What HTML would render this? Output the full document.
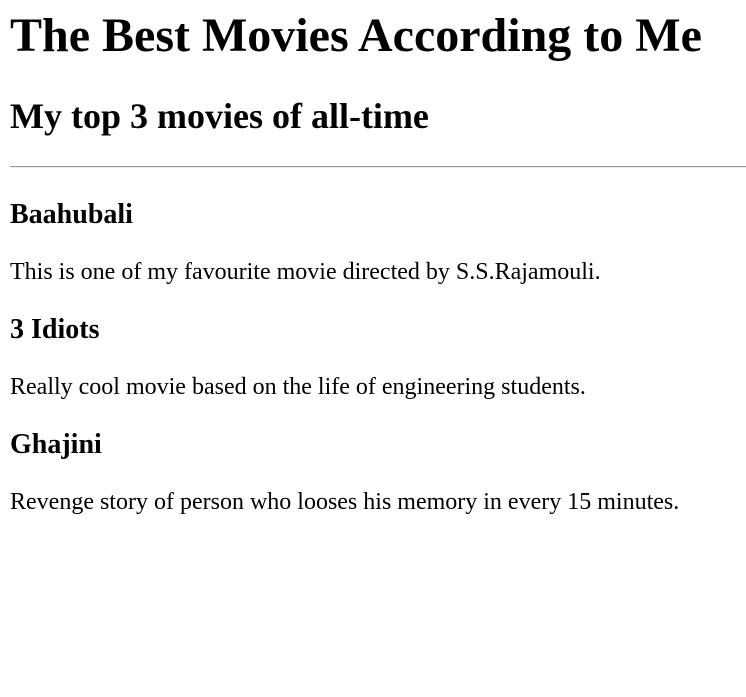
<!DOCTYPE html>
<html><head><meta charset="utf-8"><style>
html,body{margin:0;padding:0;background:#fff;}
body{padding:8px 0 0 10px;font-family:"Liberation Serif","Times New Roman",serif;color:#000;}
h1{font-size:48px;margin:0;line-height:55px;font-weight:bold;}
h2{font-size:36px;margin:33px 0 0;line-height:41px;}
hr{margin:29px 0 0;border:0;border-top:1px solid #999;border-bottom:1px solid #eee;height:0;}
h3{font-size:28px;margin:31px 0 0;line-height:32px;}
p{font-size:24px;margin:27px 0 0;line-height:28px;}
p+h3{margin-top:28px;}
</style></head><body>
<h1>The Best Movies According to Me</h1>
<h2>My top 3 movies of all-time</h2>
<hr>
<h3>Baahubali</h3>
<p>This is one of my favourite movie directed by S.S.Rajamouli.</p>
<h3>3 Idiots</h3>
<p>Really cool movie based on the life of engineering students.</p>
<h3>Ghajini</h3>
<p>Revenge story of person who looses his memory in every 15 minutes.</p>
</body></html>
